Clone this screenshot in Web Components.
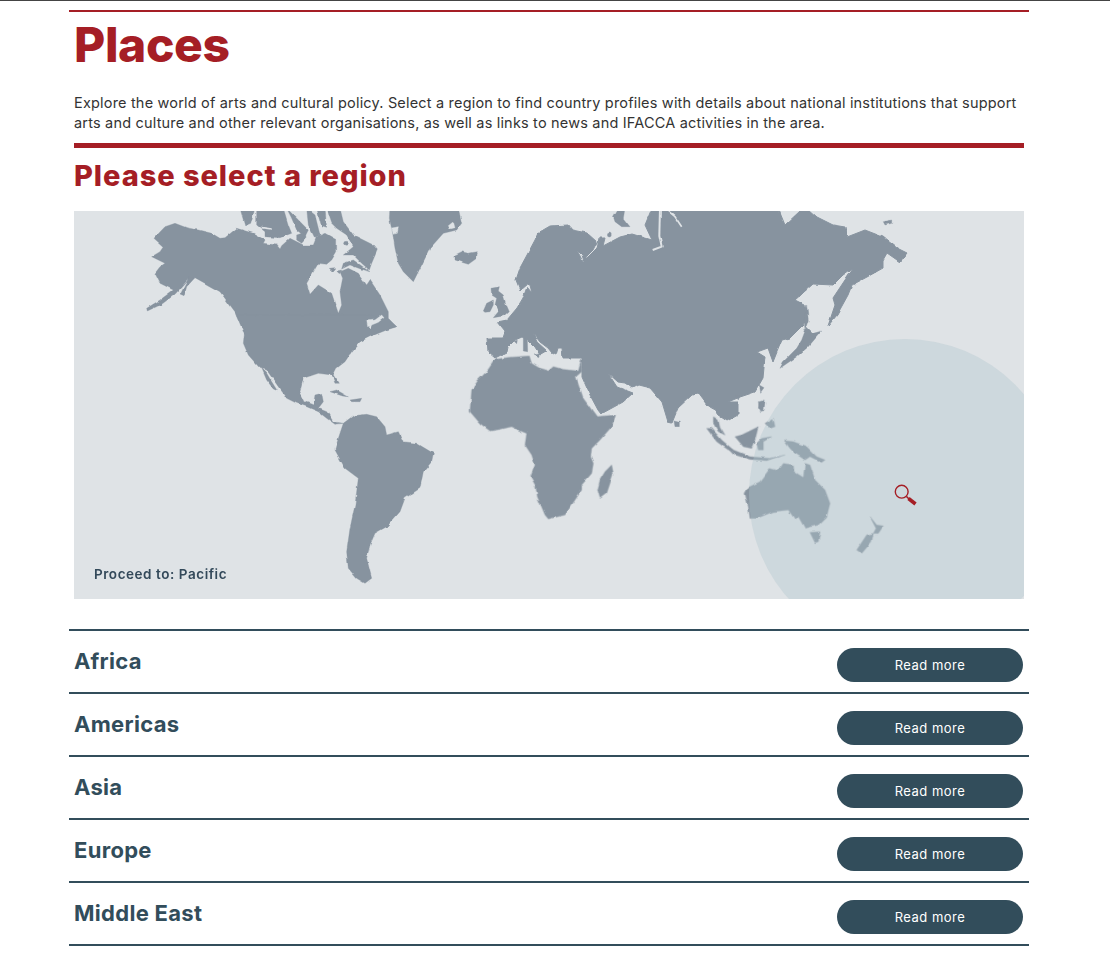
<!DOCTYPE html>
<html lang="en">
<head>
<meta charset="utf-8">
<title>Places</title>
<style>
  html, body { margin: 0; background: #fff; }
  body { border-top: 1px solid #444; font-family: Inter, "Liberation Sans", sans-serif; }
</style>
</head>
<body>
<places-page>
  <page-intro heading="Places">Explore the world of arts and cultural policy. Select a region to find country profiles with details about national institutions that support arts and culture and other relevant organisations, as well as links to news and IFACCA activities in the area.</page-intro>
  <region-map heading="Please select a region" label="Proceed to: Pacific"></region-map>
  <region-list>
    <region-row>Africa</region-row>
    <region-row>Americas</region-row>
    <region-row>Asia</region-row>
    <region-row>Europe</region-row>
    <region-row>Middle East</region-row>
  </region-list>
</places-page>

<script>
class PlacesPage extends HTMLElement {
  connectedCallback() {
    this.attachShadow({ mode: "open" })
    this.shadowRoot.innerHTML = `
      <style>
        :host { display: block; width: 960px; margin: 9px 0 0 69px; }
      </style>
      <slot></slot>
    `
  }
}

class PageIntro extends HTMLElement {
  connectedCallback() {
    this.attachShadow({ mode: "open" })
    this.shadowRoot.innerHTML = `
      <style>
        :host { display: block; border-top: 2px solid #a51e25; }
        .inner { margin: 0 5px; }
        h1 { margin: 0; padding-top: 4px; height: 77px; color: #a51e25; font-size: 48px; line-height: 58px; font-weight: 800; letter-spacing: -0.4px; }
        p { margin: 0; padding-bottom: 10px; color: #333; font-size: 14.5px; line-height: 20px; letter-spacing: 0.185px; border-bottom: 5px solid #a51e25; }
      </style>
      <div class="inner">
        <h1>${this.getAttribute("heading")}</h1>
        <p><slot></slot></p>
      </div>
    `
  }
}

class RegionMap extends HTMLElement {
  connectedCallback() {
    this.attachShadow({ mode: "open" })
    this.shadowRoot.innerHTML = `
      <style>
        :host { display: block; margin: 0 5px; }
        h2 { margin: 0; height: 63px; color: #a51e25; font-size: 29px; line-height: 56px; font-weight: 800; letter-spacing: 0.95px; }
        .map { position: relative; height: 388px; background: #dfe3e6; overflow: hidden; }
        svg { display: block; }
        .land { fill: #87939f; stroke: #87939f; stroke-width: 1; stroke-linejoin: round; }
        .water { fill: #dfe3e6; stroke: #dfe3e6; stroke-linejoin: round; }
        .label { position: absolute; left: 20px; bottom: 17px; color: #33495a; font-size: 13.5px; line-height: 16px; font-weight: 600; letter-spacing: 0.55px; }
      </style>
      <h2>${this.getAttribute("heading")}</h2>
      <div class="map">
        <svg width="950" height="388" viewBox="74 211 950 388" aria-hidden="true">
          <defs>
            <!-- roughens the traced polygons into coastlines -->
            <filter id="coast" x="-2%" y="-2%" width="104%" height="104%" color-interpolation-filters="sRGB">
              <feTurbulence type="fractalNoise" baseFrequency=".12" numOctaves="2" seed="4"/>
              <feDisplacementMap in="SourceGraphic" scale="3" xChannelSelector="R" yChannelSelector="G"/>
              <feGaussianBlur stdDeviation=".35"/>
            </filter>
          </defs>
          <g filter="url(#coast)">
          <g class="land">
            <!-- north america -->
            <g transform="translate(140 205) scale(.33333)">
              <polygon points="22,318 20,310 60,285 100,255 60,235 45,205 60,185 75,175 35,155 60,140 70,125 42,100 75,65 105,55 140,68 175,75 215,85 240,100 255,98 290,70 340,85 375,105 370,115 410,120 420,132 425,122 450,100 490,120 520,120 530,95 555,85 590,105 590,140 575,165 560,178 535,175 500,235 510,268 535,240 575,265 585,295 595,325 605,300 600,260 608,220 600,200 625,190 655,205 680,240 690,225 720,270 745,320 745,340 770,365 740,372 700,385 660,410 620,430 600,400 560,500 400,500 310,380 285,320 240,260 165,218 145,222 130,240 105,268 65,298"/>
              <polygon points="165,218 146,218 120,270 132,275 140,245"/>
              <polygon points="300,10 345,10 332,55 315,62"/>
              <polygon points="350,10 430,10 445,60 455,85 420,98 375,95 375,80 350,60"/>
              <polygon points="440,10 470,40 505,75 495,95 470,75 455,40"/>
              <polygon points="500,10 525,30 540,90 525,100 505,60"/>
              <polygon points="530,10 555,10 560,70 545,65"/>
              <polygon points="560,10 600,10 610,50 640,90 700,120 712,135 695,175 688,195 665,175 640,150 610,150 640,125 620,90 590,70 575,55"/>
              <polygon points="470,90 495,82 498,100 485,115 470,105"/>
              <polygon points="610,175 640,165 690,200 670,195 630,180 605,192"/>
              <polygon points="565,190 585,188 575,200"/>
              <polygon points="590,198 605,195 598,206"/>
              <circle cx="617" cy="115" r="6" style="fill:#87939f"/>
            </g>
            <g transform="translate(70 205) scale(.33333)">
              <polygon points="500,330 525,365 520,415 535,450 570,490 590,495 625,545 640,565 650,580 680,595 710,605 745,620 770,640 795,658 820,655 790,650 770,620 745,610 760,590 755,565 735,570 730,600 705,590 690,560 700,520 745,505 785,510 795,535 805,535 790,510 800,490 825,470 845,440 870,410 900,395 950,375 980,365 950,340 900,330 820,330 700,330 560,330"/>
              <polygon points="575,490 590,505 605,530 622,557 610,552 590,525"/>
              <!-- greenland, iceland -->
              <polygon points="960,10 1165,10 1175,55 1160,75 1120,85 1080,130 1060,170 1030,230 1000,200 985,175 975,130 968,85 958,40"/>
              <polygon points="1155,150 1175,140 1195,145 1222,140 1220,160 1195,178 1170,170 1155,165"/>
              <!-- south america -->
              <polygon points="820,655 850,632 890,628 920,635 945,665 950,690 985,680 1000,710 1040,715 1090,745 1085,770 1060,800 1050,850 1005,880 990,920 950,965 915,985 900,1020 890,1060 905,1120 885,1135 860,1120 835,1090 830,1040 840,970 855,900 865,820 825,790 795,735 805,700"/>
              <polygon points="780,560 800,555 835,575 815,572"/>
              <polygon points="840,585 875,580 870,590 845,590"/>
            </g>
            <!-- uk, med islands -->
            <g transform="translate(440 205) scale(.33333)">
              <polygon points="153,250 178,245 175,258 190,270 197,295 208,320 195,332 160,338 175,320 165,300 170,280 155,270"/>
              <polygon points="130,318 140,295 160,285 160,300 150,320 135,322"/>
              <polygon points="250,398 262,398 263,440 250,438"/>
              <polygon points="282,450 300,446 296,458"/>
              <polygon points="222,408 232,406 230,416"/>
            </g>
            <!-- eurasia -->
            <polygon points="582,358 573,358 563,358 562,348 558,348 556,355 552,353 548,348 540,342 533,333 537,342 547,351 540,355 535,347 528,340 522,337 515,340 508,347 507,352 495,358 488,352 487,338 503,338 505,332 497,322 507,320 517,308 523,298 527,287 532,293 530,285 527,284 520,290 516,280 520,268 527,255 535,240 538,233 550,226 568,225 572,230 587,233 597,242 593,250 587,256 584,261 582,255 577,250 583,262 588,257 597,248 599,238 605,238 603,246 620,237 632,234 652,240 645,225 652,208 778,208 785,225 800,211 808,209 817,217 833,225 845,227 847,237 865,230 883,237 897,248 907,253 900,262 897,260 887,253 883,260 883,268 867,277 852,285 848,295 837,315 828,326 835,305 833,298 845,280 853,268 843,275 833,285 813,284 795,300 805,305 807,318 803,325 790,338 782,340 777,352 773,362 768,348 757,352 765,357 763,378 755,392 740,397 728,402 738,402 738,415 727,421 718,415 713,408 707,405 698,393 692,395 678,408 672,423 668,422 662,402 650,388 638,385 632,388 625,383 618,382 608,373 617,387 633,393 623,402 601,414 598,410 590,395 582,377"/>
            <g transform="translate(550 205) scale(.33333)">
              <polygon points="190,35 205,10 225,10 220,40 240,65 215,65 195,50"/>
              <circle cx="178" cy="90" r="6" style="fill:#87939f"/>
              <polygon points="690,490 740,455 775,425 815,378 790,385 770,365 755,405 740,430 700,470"/>
              <polygon points="770,300 775,345 765,375 762,340"/>
              <polygon points="628,540 642,548 632,562"/>
              <polygon points="628,590 645,590 640,618 625,610"/>
              <polygon points="372,648 388,652 388,665 375,665"/>
              <polygon points="558,572 570,572 565,585"/>
              <polygon points="1000,50 1025,45 1025,55 1005,60"/>
            </g>
            <!-- africa -->
            <g transform="translate(450 340) scale(.33333)">
              <polygon points="135,58 175,52 238,48 245,70 270,85 295,93 310,80 340,88 385,93 394,60 395,95 378,110 400,175 425,210 440,230 497,225 485,260 450,300 425,325 422,350 430,370 425,400 395,435 395,450 375,480 345,525 295,537 285,525 262,470 258,440 242,410 255,375 245,345 225,315 230,280 205,270 185,260 150,268 120,273 90,250 60,215 65,150 85,120 110,95"/>
              <polygon points="485,375 490,400 470,460 450,475 443,450 450,420 465,395"/>
            </g>
            <!-- south east asia, oceania -->
            <g transform="translate(690 400) scale(.33333)">
              <polygon points="70,50 85,60 90,80 105,105 85,95 70,70"/>
              <polygon points="50,85 65,85 95,120 130,150 115,150 80,125"/>
              <polygon points="110,140 130,150 180,170 240,175 285,165 250,175 230,182 180,178 135,165"/>
              <polygon points="135,110 155,105 175,95 205,80 195,120 185,145 160,140"/>
              <polygon points="200,130 215,115 245,110 220,125 220,150 205,150"/>
              <polygon points="225,70 250,55 255,80 240,85"/>
              <polygon points="283,122 310,125 350,140 380,170 405,180 395,187 360,170 345,180 315,160 300,145"/>
              <polygon points="205,8 222,0 222,30 212,35"/>
              <polygon points="165,280 175,262 210,245 240,205 265,212 280,190 310,195 312,215 340,232 345,190 360,195 375,240 405,270 420,310 410,350 385,375 345,385 325,350 315,358 295,330 250,335 200,355 180,355 175,320"/>
              <polygon points="360,397 390,395 385,425 375,428"/>
              <polygon points="540,350 560,375 580,378 565,400 550,400 558,385"/>
              <polygon points="500,450 530,405 550,400 545,425 515,460"/>
            </g>
          </g>
          <!-- inland water -->
          <g class="water">
            <g transform="translate(70 205) scale(.33333)">
              <polygon points="890,348 915,345 935,330 942,338 925,352 905,360 900,372 893,365"/>
              <polygon points="965,72 985,68 982,85 970,88"/>
              <polygon points="1135,62 1150,50 1155,68 1140,72"/>
              <polyline points="575,68 605,72" style="fill:none;stroke-width:5"/>
            </g>
            <g transform="translate(550 205) scale(.33333)">
              <polyline points="330,10 328,90 335,125 308,135" style="fill:none;stroke-width:6"/>
              <polyline points="345,10 375,35 395,65" style="fill:none;stroke-width:5"/>
            </g>
          </g>
          </g>
          <circle cx="905" cy="495" r="156" fill="#b1c7cf" fill-opacity=".39"/>
          <!-- magnifier -->
          <circle cx="901.7" cy="491.7" r="6.4" fill="none" stroke="#a51e25" stroke-width="1.4"/>
          <line x1="906.5" y1="496.5" x2="909" y2="499" stroke="#a51e25" stroke-width="1.6"/>
          <line x1="908.5" y1="498.5" x2="915.5" y2="504" stroke="#a51e25" stroke-width="3.6"/>
        </svg>
        <span class="label">${this.getAttribute("label")}</span>
      </div>
    `
  }
}

class RegionList extends HTMLElement {
  connectedCallback() {
    this.attachShadow({ mode: "open" })
    this.shadowRoot.innerHTML = `
      <style>
        :host { display: block; margin-top: 30px; border-top: 2px solid #324d5b; }
      </style>
      <slot></slot>
    `
  }
}

class RegionRow extends HTMLElement {
  connectedCallback() {
    this.attachShadow({ mode: "open" })
    this.shadowRoot.innerHTML = `
      <style>
        :host { display: block; border-bottom: 2px solid #324d5b; }
        .row { display: flex; justify-content: space-between; align-items: flex-start; height: 61px; padding: 0 6px 0 5px; }
        h3 { margin: 0; padding-top: 15px; color: #324d5b; font-size: 22px; line-height: 30px; font-weight: 700; letter-spacing: 0.3px; }
        a { margin-top: 17px; width: 186px; height: 34px; border-radius: 17px; background: #324d5b; color: #fff; font-size: 13px; line-height: 35px; text-align: center; text-decoration: none; letter-spacing: 0.5px; }
      </style>
      <div class="row">
        <h3><slot></slot></h3>
        <a href="#">Read more</a>
      </div>
    `
  }
}

customElements.define("places-page", PlacesPage)
customElements.define("page-intro", PageIntro)
customElements.define("region-map", RegionMap)
customElements.define("region-list", RegionList)
customElements.define("region-row", RegionRow)
</script>
</body>
</html>
